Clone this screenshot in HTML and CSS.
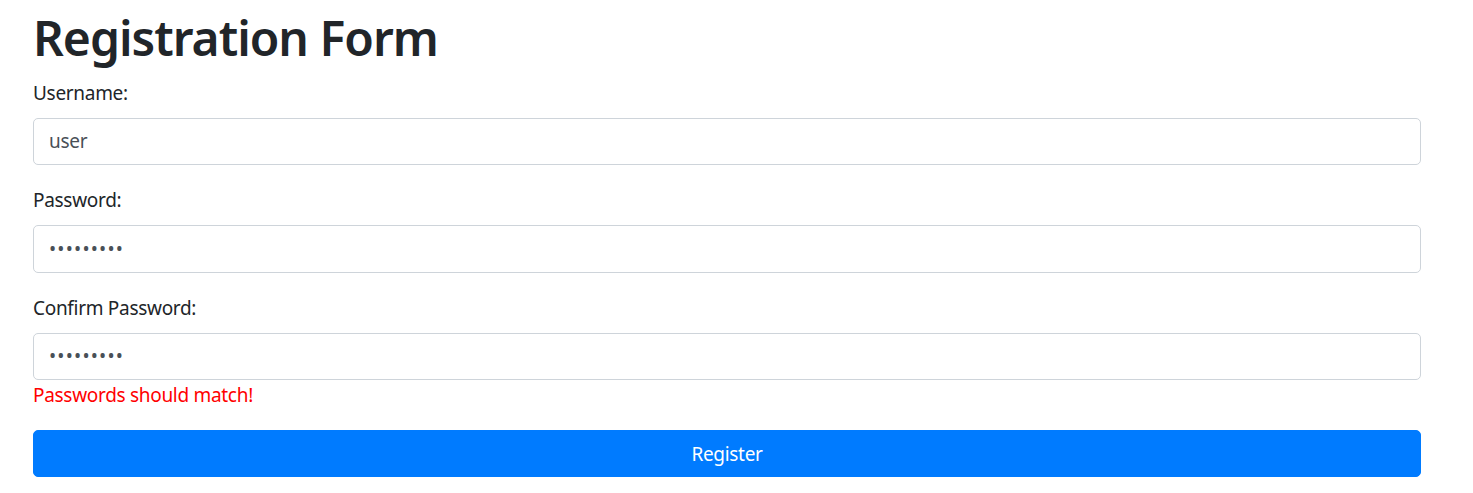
FILE: index.html
```html
<!DOCTYPE html>
<html lang="en">
<head>
<meta charset="utf-8">
<title>Registration Form</title>
<link rel="stylesheet" href="styles.css">
</head>
<body>
<div class="container">
  <h1 class="title">Registration Form</h1>
  <form class="form">
    <div class="form-group">
      <label class="label" for="username">Username:</label>
      <input class="form-control" id="username" type="text" value="user">
    </div>
    <div class="form-group">
      <label class="label" for="password">Password:</label>
      <input class="form-control secret" id="password" type="password" value="123456789">
    </div>
    <div class="form-group">
      <label class="label" for="confirm">Confirm Password:</label>
      <input class="form-control secret" id="confirm" type="password" value="123456789">
      <div class="error">Passwords should match!</div>
    </div>
    <button class="btn" type="button">Register</button>
  </form>
</div>
</body>
</html>
```
FILE: styles.css
```css
html, body {
  margin: 0;
  padding: 0;
  background: #fff;
}
body {
  font-family: "Noto Sans", "Open Sans", sans-serif;
  font-size: 19px;
  letter-spacing: -0.3px;
  line-height: 1.5;
  color: #212529;
}
.container {
  padding: 7.5px 52px 0 33px;
}
.title {
  margin: 0 0 10px 0;
  font-size: 48px;
  font-weight: 600;
  letter-spacing: -1px;
  line-height: 60px;
}
.form {
  display: flex;
  flex-direction: column;
}
.form-group {
  display: flex;
  flex-direction: column;
  margin-bottom: 20px;
}
.label {
  line-height: 30px;
  margin-bottom: 10px;
}
.form-control {
  box-sizing: border-box;
  width: 100%;
  height: 47.5px;
  margin: 0;
  padding: 0 15px;
  font-family: inherit;
  font-size: 19px;
  letter-spacing: -0.3px;
  color: #495057;
  background: #fff;
  border: 1px solid #ced4da;
  border-radius: 5px;
  outline: none;
}
.secret {
  letter-spacing: 1.2px;
}
.error {
  color: #ff0000;
  line-height: 30px;
}
.btn {
  box-sizing: border-box;
  width: 100%;
  height: 47px;
  margin: 0;
  padding: 0;
  font-family: inherit;
  font-size: 19px;
  letter-spacing: -0.3px;
  color: #fff;
  background: #007bff;
  border: 1px solid #007bff;
  border-radius: 5px;
}
```
